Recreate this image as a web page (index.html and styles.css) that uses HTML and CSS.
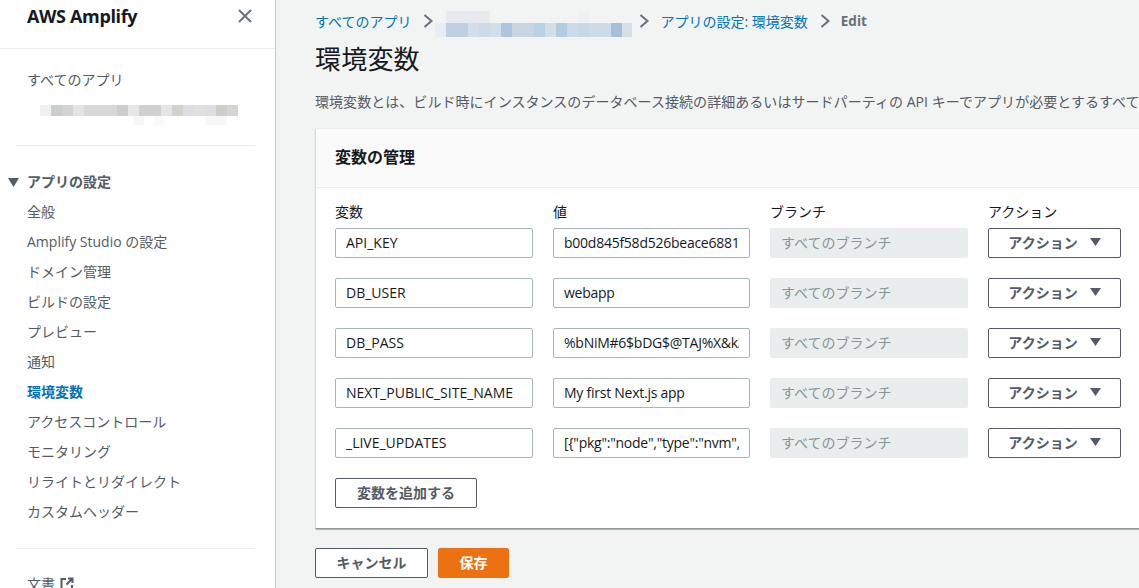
FILE: index.html
```html
<!DOCTYPE html>
<html lang="ja">
<head>
<meta charset="utf-8">
<title>環境変数</title>
<link rel="stylesheet" href="styles.css">
</head>
<body>
<div class="app">
  <aside class="sidebar">
    <div class="side-head">
      <span class="brand">AWS Amplify</span>
      <svg class="close" width="16" height="16" viewBox="0 0 16 16"><path d="M2 2l12 12M14 2L2 14" fill="none" stroke="#687078" stroke-width="2"/></svg>
    </div>
    <div class="side-apps">
      <div class="side-link">すべてのアプリ</div>
      <div class="blur-side"></div>
    </div>
    <hr class="side-rule">
    <nav class="side-nav">
      <div class="nav-title"><svg class="nav-caret" width="11" height="9" viewBox="0 0 11 9"><path d="M0 0h11L5.500 9z" fill="#545b64"/></svg>アプリの設定</div>
      <a class="nav-item">全般</a>
      <a class="nav-item">Amplify Studio の設定</a>
      <a class="nav-item">ドメイン管理</a>
      <a class="nav-item">ビルドの設定</a>
      <a class="nav-item">プレビュー</a>
      <a class="nav-item">通知</a>
      <a class="nav-item active">環境変数</a>
      <a class="nav-item">アクセスコントロール</a>
      <a class="nav-item">モニタリング</a>
      <a class="nav-item">リライトとリダイレクト</a>
      <a class="nav-item">カスタムヘッダー</a>
    </nav>
    <hr class="side-rule rule-low">
    <div class="side-doc">文書<svg width="14" height="14" viewBox="0 0 14 14"><path d="M6 2H1.500v10.500H12V8M8 1.500h4.500V6M12 2L6.500 7.500" fill="none" stroke="#545b64" stroke-width="2"/></svg></div>
  </aside>
  <main class="main">
    <div class="crumbs">
      <a class="crumb">すべてのアプリ</a>
      <svg class="chev" width="10" height="14" viewBox="0 0 10 14"><path d="M1.500 1l7 6-7 6" fill="none" stroke="#687078" stroke-width="2"/></svg>
      <div class="blur-crumb"></div>
      <svg class="chev" width="10" height="14" viewBox="0 0 10 14"><path d="M1.500 1l7 6-7 6" fill="none" stroke="#687078" stroke-width="2"/></svg>
      <a class="crumb">アプリの設定: 環境変数</a>
      <svg class="chev" width="10" height="14" viewBox="0 0 10 14"><path d="M1.500 1l7 6-7 6" fill="none" stroke="#687078" stroke-width="2"/></svg>
      <span class="crumb-now">Edit</span>
    </div>
    <h1 class="title">環境変数</h1>
    <p class="desc">環境変数とは、ビルド時にインスタンスのデータベース接続の詳細あるいはサードパーティの API キーでアプリが必要とするすべての設定値です。</p>
    <section class="card">
      <header class="card-head"><h2>変数の管理</h2></header>
      <div class="card-body">
        <div class="grid labels">
          <label>変数</label><label>値</label><label>ブランチ</label><label>アクション</label>
        </div>
        <div class="grid row">
          <input class="field" value="API_KEY"><input class="field val" value="b00d845f58d526beace6881f">
          <input class="field off" value="すべてのブランチ" disabled>
          <button class="btn action">アクション<svg width="11" height="8" viewBox="0 0 11 8"><path d="M0 0h11L5.500 8z" fill="#545b64"/></svg></button>
        </div>
        <div class="grid row">
          <input class="field" value="DB_USER"><input class="field val" value="webapp">
          <input class="field off" value="すべてのブランチ" disabled>
          <button class="btn action">アクション<svg width="11" height="8" viewBox="0 0 11 8"><path d="M0 0h11L5.500 8z" fill="#545b64"/></svg></button>
        </div>
        <div class="grid row">
          <input class="field" value="DB_PASS"><input class="field val" value="%bNiM#6$bDG$@TAJ%X&amp;k3z">
          <input class="field off" value="すべてのブランチ" disabled>
          <button class="btn action">アクション<svg width="11" height="8" viewBox="0 0 11 8"><path d="M0 0h11L5.500 8z" fill="#545b64"/></svg></button>
        </div>
        <div class="grid row">
          <input class="field" value="NEXT_PUBLIC_SITE_NAME"><input class="field val" value="My first Next.js app">
          <input class="field off" value="すべてのブランチ" disabled>
          <button class="btn action">アクション<svg width="11" height="8" viewBox="0 0 11 8"><path d="M0 0h11L5.500 8z" fill="#545b64"/></svg></button>
        </div>
        <div class="grid row">
          <input class="field" value="_LIVE_UPDATES"><input class="field val" value='[{"pkg":"node","type":"nvm","version":"16"}]'>
          <input class="field off" value="すべてのブランチ" disabled>
          <button class="btn action">アクション<svg width="11" height="8" viewBox="0 0 11 8"><path d="M0 0h11L5.500 8z" fill="#545b64"/></svg></button>
        </div>
        <button class="btn add">変数を追加する</button>
      </div>
    </section>
    <div class="footer">
      <button class="btn cancel">キャンセル</button>
      <button class="btn save">保存</button>
    </div>
  </main>
</div>
</body>
</html>
```
FILE: styles.css
```css
* { box-sizing: border-box; }
html, body { margin: 0; height: 100%; overflow: hidden; }
body {
  font-family: "Open Sans", "Noto Sans CJK JP", sans-serif;
  font-size: 14px;
  color: #16191f;
  background: #f2f3f3;
}
.app { display: flex; height: 588px; width: 1139px; overflow: hidden; }

.sidebar {
  flex: 0 0 276px;
  height: 588px;
  overflow: hidden;
  background: #fff;
  border-right: 1px solid #c6c9c9;
}
.side-head {
  height: 49px;
  padding: 0 22px 16px 27px;
  border-bottom: 1px solid #eaeded;
  display: flex;
  justify-content: space-between;
  align-items: center;
}
.brand { font-size: 18px; font-weight: 700; letter-spacing: -.35px; line-height: 24px; }
.side-apps { padding: 21px 27px 0; height: 96px; }
.side-link { color: #545b64; line-height: 20px; }
.blur-side {
  width: 198px;
  height: 20px;
  margin: 15px 0 0 13px;
  background:
    linear-gradient(90deg, #f0f0f0 0 11px, #c9ced0 11px 22px, #d3d3d0 22px 33px, #e2e4e4 33px 44px, #d8d8d8 44px 77px, #cdcdcd 77px 88px, #e6e8e8 88px 99px, #d0d0d0 99px 121px, #e2e6e9 121px 132px, #d3d1ce 132px 143px, #dbdfe3 143px 154px, #e0e0dc 154px 165px, #dcdfe2 165px 176px, #cfcdca 176px 187px, #d6d5d2 187px 198px) 0 0 / 198px 11px no-repeat,
    linear-gradient(90deg, transparent 0 93px, #f7f7f7 93px 104px, transparent 104px 114px, #fafafa 114px 125px, transparent 125px 165px, #f7f7f7 165px 187px, transparent 187px) 0 11px / 198px 9px no-repeat;
}
.side-rule {
  height: 1px;
  margin: 0 20px 0 15px;
  border: 0;
  background: #eaeded;
}
.side-nav { padding-top: 26px; }
.nav-title {
  display: flex;
  align-items: center;
  font-weight: 600;
  color: #545b64;
  line-height: 20px;
  padding-left: 8px;
  margin-bottom: 10px;
}
.nav-caret { margin-right: 8px; }
.nav-item {
  display: block;
  height: 30px;
  line-height: 20px;
  padding-left: 27px;
  color: #545b64;
  white-space: nowrap;
}
.nav-item.active { color: #0073bb; font-weight: 600; }
.rule-low { margin-top: 16px; }
.side-doc {
  display: flex;
  align-items: center;
  gap: 5px;
  padding: 25px 0 0 27px;
  line-height: 20px;
  color: #545b64;
}

.main { flex: 1 0 0; min-width: 0; padding: 11px 0 0 39px; overflow: hidden; }
.crumbs { display: flex; align-items: center; height: 20px; white-space: nowrap; }
.crumb { color: #0073bb; }
.chev { margin: 0 11px 0 12px; flex: none; }
.crumb-now { color: #687078; font-weight: 700; font-size: 13.5px; }
.blur-crumb {
  flex: none;
  width: 197px;
  height: 26px;
  margin: 5px -5px 0 -9px;
  background:
    linear-gradient(90deg, transparent 0 11px, #e6eaee 11px 55px, transparent 55px 143px, #eef1f3 143px 154px, transparent 154px) 0 0 / 197px 12px no-repeat,
    linear-gradient(90deg, #e8edf1 0 11px, #bcd0e2 11px 33px, #d2dee8 33px 44px, #cddbe6 44px 55px, #d2dee8 55px 66px, #aec6dd 66px 77px, #c9d3e2 77px 99px, #b7d1e5 99px 110px, #d2dee8 110px 121px, #b2cde0 121px 132px, #cbdce8 132px 143px, #c6d9e6 143px 154px, #cbdce8 154px 176px, #a5c0da 176px 187px, #d3e0ea 187px 197px) 0 12px / 197px 14px no-repeat;
}
.title {
  margin: 9px 0 0;
  font-size: 26px;
  font-weight: 400;
  line-height: 38px;
  letter-spacing: .2px;
}
.desc {
  margin: 14px 0 0;
  color: #545b64;
  font-size: 14px;
  letter-spacing: .05px;
  line-height: 20px;
  white-space: nowrap;
}
.card {
  width: 900px;
  height: 401px;
  margin-top: 16px;
  background: #fff;
  border: 1px solid #eaeded;
  border-bottom-color: #8d9696;
  border-left-color: #d5dbdb;
  box-shadow: 0 1px 1px rgba(0, 28, 36, .3);
  border-radius: 2px;
}
.card-head {
  height: 59px;
  background: #fafafa;
  border-bottom: 1px solid #eaeded;
  padding: 0 19px 2px;
  display: flex;
  align-items: center;
}
.card-head h2 { margin: 0; font-size: 16px; font-weight: 700; line-height: 22px; }
.card-body { padding: 14px 19px; }
.grid {
  display: grid;
  grid-template-columns: 198px 197px 198px 133px;
  column-gap: 20px;
}
.labels { height: 26px; line-height: 20px; }
.labels label { color: #16191f; }
.row { height: 50px; }
.field {
  width: 100%;
  height: 30px;
  margin: 0;
  padding: 0 10px 2px;
  font: inherit;
  color: #16191f;
  background: #fff;
  border: 1px solid #aab7b8;
  border-radius: 2px;
  outline: none;
}
.val { letter-spacing: -.25px; }
.field.off {
  background: #eaeded;
  border-color: #eaeded;
  color: #879596;
  -webkit-text-fill-color: #879596;
  opacity: 1;
}
.btn {
  height: 30px;
  padding: 0 0 2px;
  font: inherit;
  font-weight: 700;
  color: #545b64;
  background: #fff;
  border: 1px solid #545b64;
  border-radius: 2px;
}
.action {
  display: flex;
  align-items: center;
  justify-content: center;
  gap: 12px;
}
.add { width: 142px; display: block; }
.footer { display: flex; gap: 10px; margin-top: 19px; }
.cancel { width: 113px; }
.save { width: 71px; background: #ec7211; border-color: #ec7211; color: #fff; }
```
